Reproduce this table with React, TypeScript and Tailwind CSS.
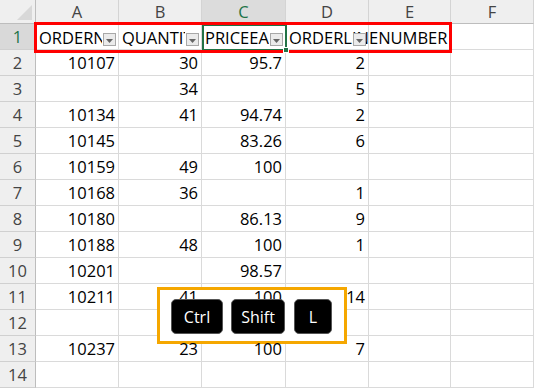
import React from "react";

const WIDTHS = ["w-[83px]", "w-[83px]", "w-[84px]", "w-[83px]", "w-[82px]", "flex-1"];
const LETTERS = ["A", "B", "C", "D", "E", "F"];
const HEADERS = ["ORDERNUMBER", "QUANTITYORDERED", "PRICEEACH", "ORDERLINENUMBER"];

const DATA: string[][] = [
  ["10107", "30", "95.7", "2"],
  ["", "34", "", "5"],
  ["10134", "41", "94.74", "2"],
  ["10145", "", "83.26", "6"],
  ["10159", "49", "100", ""],
  ["10168", "36", "", "1"],
  ["10180", "", "86.13", "9"],
  ["10188", "48", "100", "1"],
  ["10201", "", "98.57", ""],
  ["10211", "41", "100", "14"],
  ["", "", "", ""],
  ["10237", "23", "100", "7"],
  ["", "", "", ""],
];

function FilterButton() {
  return (
    <div className="absolute right-[2px] bottom-[3px] w-[13px] h-[13px] border border-[#a8a8a8] bg-[#ebebeb] flex items-center justify-center">
      <svg width="7" height="4" viewBox="0 0 7 4" className="mt-[2px]">
        <polygon points="0,0 7,0 3.5,4" fill="#666" />
      </svg>
    </div>
  );
}

function RowLabel({ n, selected }: { n: number; selected?: boolean }) {
  return (
    <div
      className={`w-[36px] h-full shrink-0 flex items-center justify-center border-r border-b border-r-[#bdbdbd] border-b-[#d0d0d0] ${
        selected ? "bg-[#d9d9d9] text-[#217346]" : "bg-[#efefef] text-[#444]"
      }`}
    >
      <span className="pt-[1px]">{n}</span>
    </div>
  );
}

export default function App() {
  return (
    <div
      className="relative w-[534px] h-[388px] overflow-hidden bg-white text-[16.5px] leading-none text-black"
      style={{ fontFamily: "'Open Sans', 'Noto Sans', sans-serif" }}
    >
      {/* Column header row */}
      <div className="flex h-[24px]">
        <div className="relative w-[36px] h-full shrink-0 bg-[#efefef] border-r border-b border-r-[#bdbdbd] border-b-[#bdbdbd]">
          <svg width="36" height="24" className="absolute left-0 top-0">
            <polygon points="32,5 32,20 17,20" fill="#d8d8d8" />
          </svg>
        </div>
        {LETTERS.map((l, i) => (
          <div
            key={l}
            className={`${WIDTHS[i]} h-full shrink-0 flex items-center justify-center border-r border-b border-r-[#d4d4d4] border-b-[#bdbdbd] ${
              i === 2 ? "bg-[#dcdcdc] text-[#217346]" : "bg-[#efefef] text-[#444]"
            }`}
          >
            <span className="pt-[2px]">{l}</span>
          </div>
        ))}
      </div>

      {/* Row 1 - headers with filters */}
      <div className="flex h-[26px]">
        <RowLabel n={1} selected />
        {LETTERS.map((l, i) => (
          <div
            key={l}
            className={`${WIDTHS[i]} relative h-full shrink-0 flex items-center border-r border-b border-[#dadada] ${
              i === 3 || i === 4 ? "overflow-visible" : "overflow-hidden pr-[16px]"
            }`}
          >
            {i < 4 && (
              <>
                <span
                  className={`pl-[3px] pt-[3px] whitespace-nowrap ${
                    i === 3 ? "" : "flex-1 min-w-0 overflow-hidden"
                  }`}
                >
                  {HEADERS[i]}
                </span>
                <FilterButton />
              </>
            )}
          </div>
        ))}
      </div>

      {/* Data rows */}
      {DATA.map((row, r) => (
        <div key={r} className="flex h-[26px]">
          <RowLabel n={r + 2} />
          {LETTERS.map((l, i) => (
            <div
              key={l}
              className={`${WIDTHS[i]} h-full shrink-0 flex items-center justify-end pr-[3px] border-r border-b border-[#dadada]`}
            >
              {i < 4 && row[i] !== "" && <span className="relative z-20 pt-[2px]">{row[i]}</span>}
            </div>
          ))}
        </div>
      ))}

      {/* Active cell C1 */}
      <div className="absolute left-[202px] top-[24px] w-[85px] h-[27px] border-2 border-[#217346]" />

      {/* Red highlight around header row */}
      <div className="absolute left-[34px] top-[22px] w-[418px] h-[31px] border-[3px] border-[#ff0000]" />

      {/* Fill handle */}
      <div className="absolute left-[283px] top-[47px] w-[6px] h-[6px] bg-[#217346] border border-white" />

      {/* Keyboard shortcut overlay */}
      <div className="absolute left-[157px] top-[287px] w-[190px] h-[57px] border-[3px] border-[#f5a700] bg-white flex items-start gap-[8px] pl-[11px] pt-[9px]">
        <div className="relative z-30 w-[52px] h-[35px] rounded-[5px] bg-black border border-[#555] text-white text-[16px] flex items-center justify-center">
          Ctrl
        </div>
        <div className="relative z-30 w-[54px] h-[35px] rounded-[5px] bg-black border border-[#555] text-white text-[16px] flex items-center justify-center">
          Shift
        </div>
        <div className="relative z-30 w-[38px] h-[35px] rounded-[5px] bg-black border border-[#555] text-white text-[16px] flex items-center justify-center ml-[1px]">
          L
        </div>
      </div>
    </div>
  );
}
